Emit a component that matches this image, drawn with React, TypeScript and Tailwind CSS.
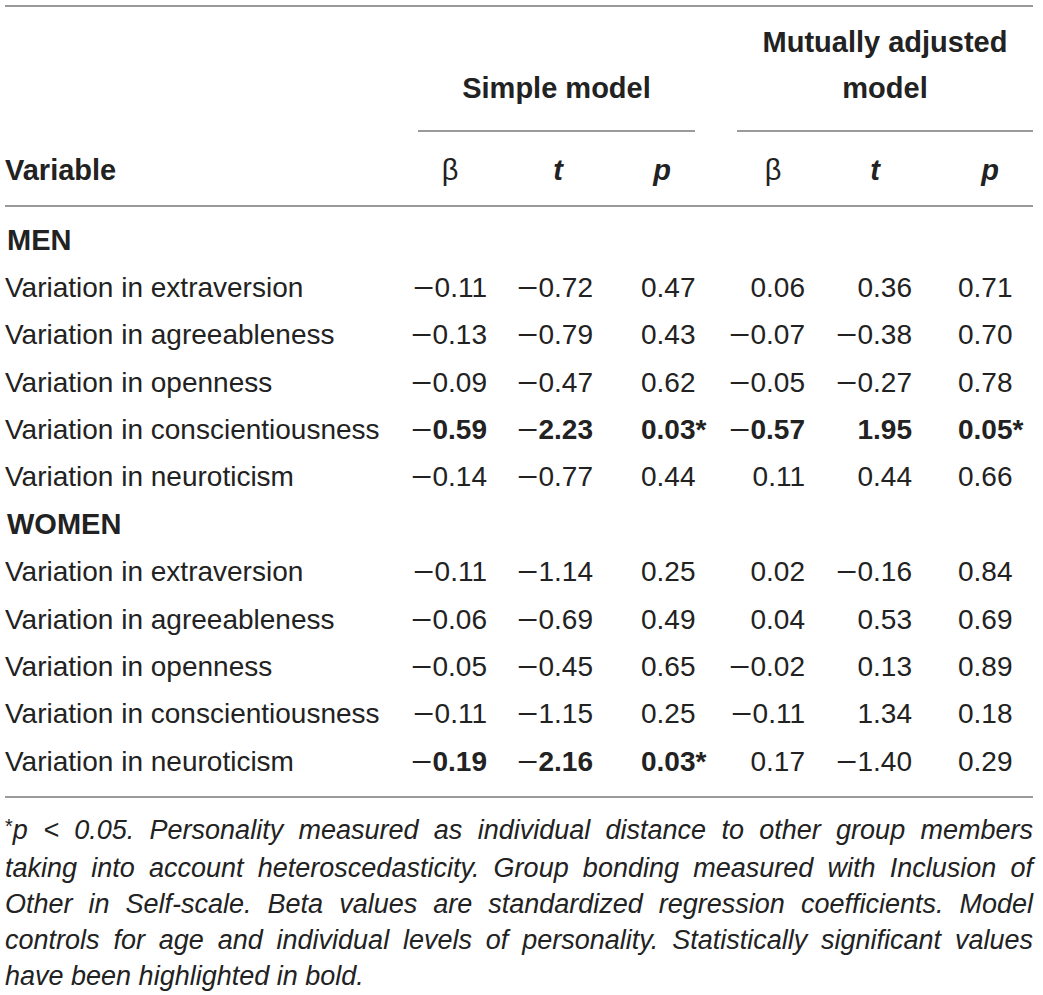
type Row = {
  label: string;
  vals: string[];
  bold?: boolean[];
};

const men: Row[] = [
  { label: 'Variation in extraversion', vals: ['−0.11', '−0.72', '0.47', '0.06', '0.36', '0.71'] },
  { label: 'Variation in agreeableness', vals: ['−0.13', '−0.79', '0.43', '−0.07', '−0.38', '0.70'] },
  { label: 'Variation in openness', vals: ['−0.09', '−0.47', '0.62', '−0.05', '−0.27', '0.78'] },
  {
    label: 'Variation in conscientiousness',
    vals: ['−0.59', '−2.23', '0.03*', '−0.57', '1.95', '0.05*'],
    bold: [true, true, true, true, true, true],
  },
  { label: 'Variation in neuroticism', vals: ['−0.14', '−0.77', '0.44', '0.11', '0.44', '0.66'] },
];

const women: Row[] = [
  { label: 'Variation in extraversion', vals: ['−0.11', '−1.14', '0.25', '0.02', '−0.16', '0.84'] },
  { label: 'Variation in agreeableness', vals: ['−0.06', '−0.69', '0.49', '0.04', '0.53', '0.69'] },
  { label: 'Variation in openness', vals: ['−0.05', '−0.45', '0.65', '−0.02', '0.13', '0.89'] },
  { label: 'Variation in conscientiousness', vals: ['−0.11', '−1.15', '0.25', '−0.11', '1.34', '0.18'] },
  {
    label: 'Variation in neuroticism',
    vals: ['−0.19', '−2.16', '0.03*', '0.17', '−1.40', '0.29'],
    bold: [true, true, true, false, false, false],
  },
];

const GRID = 'grid grid-cols-[392px_90px_106px_127px_85px_107px_121px]';

// per-column alignment in the body
const cellCls = [
  'text-right',
  'text-right',
  'text-left pl-[48px]',
  'text-right',
  'text-right',
  'text-left pl-[46px]',
];

function Value({ v, bold }: { v: string; bold?: boolean }) {
  const neg = v.startsWith('−');
  const rest = neg ? v.slice(1) : v;
  return (
    <>
      {neg && (
        <span className="inline-block w-[22px] origin-left scale-x-[1.3] text-left font-normal">−</span>
      )}
      <span className={bold ? 'font-bold' : ''}>{rest}</span>
    </>
  );
}

function DataRow({ row }: { row: Row }) {
  return (
    <div className={`${GRID} h-[47.36px] items-center`}>
      <div className="whitespace-nowrap">{row.label}</div>
      {row.vals.map((v, i) => (
        <div key={i} className={`whitespace-nowrap ${cellCls[i]}`}>
          <Value v={v} bold={row.bold?.[i]} />
        </div>
      ))}
    </div>
  );
}

function Section({ title, items }: { title: string; items: Row[] }) {
  return (
    <>
      <div className="flex h-[47.36px] items-center pl-[2px] text-[29px] font-bold">{title}</div>
      {items.map((r) => (
        <DataRow key={r.label} row={r} />
      ))}
    </>
  );
}

const Line = () => <div className="h-[2px] w-[1028px] bg-[#9a9a9a]" />;

const noteLines = [
  'p < 0.05. Personality measured as individual distance to other group members',
  'taking into account heteroscedasticity. Group bonding measured with Inclusion of',
  'Other in Self-scale. Beta values are standardized regression coefficients. Model',
  'controls for age and individual levels of personality. Statistically significant values',
  'have been highlighted in bold.',
];

export default function App() {
  return (
    <div
      className="min-h-screen w-[1043px] bg-white pl-[5px] pt-[5px] text-[28px] text-[#222]"
      style={{ fontFamily: '"Liberation Sans", Arial, sans-serif' }}
    >
      <Line />

      {/* group headings */}
      <div className="grid grid-cols-[413px_277px_42px_296px] pt-[12px] text-[29px] font-bold leading-[46px]">
        <div />
        <div className="flex items-end justify-center border-b-2 border-[#9a9a9a] pb-[19px]">
          Simple model
        </div>
        <div />
        <div className="border-b-2 border-[#9a9a9a] pb-[19px] text-center">
          Mutually adjusted
          <br />
          model
        </div>
      </div>

      {/* column headings */}
      <div className={`${GRID} pb-[12px] pt-[15px] text-[29px] font-bold leading-[46px]`}>
        <div>Variable</div>
        <div className="pl-[16px] text-center font-normal">β</div>
        <div className="pl-[36px] text-center italic">t</div>
        <div className="pl-[11px] text-center italic">p</div>
        <div className="pl-[21px] text-center font-normal">β</div>
        <div className="pl-[33px] text-center italic">t</div>
        <div className="pl-[35px] text-center italic">p</div>
      </div>
      <Line />

      <div className="pb-[11px] pt-[10px]">
        <Section title="MEN" items={men} />
        <Section title="WOMEN" items={women} />
      </div>
      <Line />

      <div className="w-[1028px] pt-[14px] text-[27px] italic leading-[36px]">
        {noteLines.map((l, i) => {
          const last = i === noteLines.length - 1;
          return (
            <div
              key={i}
              className={
                last ? 'whitespace-nowrap' : 'whitespace-nowrap text-justify [text-align-last:justify]'
              }
            >
              {i === 0 && <span className="relative -top-[6px] text-[20px] not-italic">*</span>}
              {l}
            </div>
          );
        })}
      </div>
    </div>
  );
}
